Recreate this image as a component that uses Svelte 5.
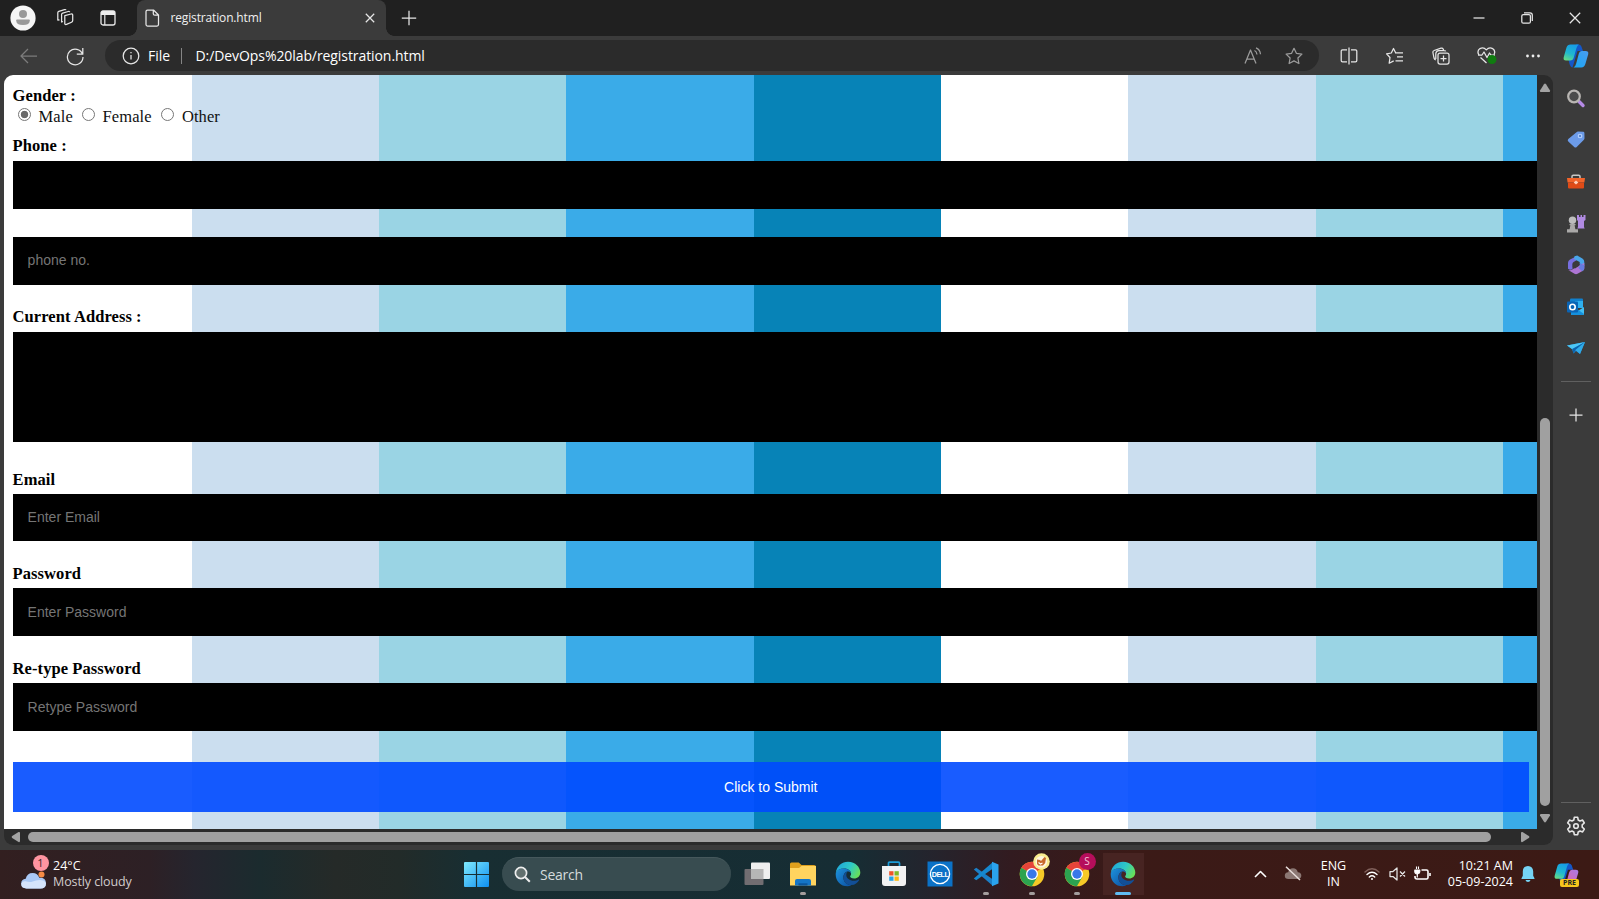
<script>
  const apps = ['taskview', 'explorer', 'edge', 'store', 'dell', 'vscode', 'chromeA', 'chromeB', 'edgeActive'];
  const side = ['search', 'tag', 'toolbox', 'games', 'm365', 'outlook', 'plane'];
  const genders = ['Male', 'Female', 'Other'];
  const running = ['explorer', 'vscode', 'chromeA', 'chromeB'];
</script>

<svelte:head><title>registration.html</title></svelte:head>

{#snippet edgeLogo(id)}
  <svg width="26" height="26" viewBox="0 0 26 26">
    <defs>
      <linearGradient id={id + 'a'} x1="0" y1="0.2" x2="1" y2="0.6"><stop offset="0" stop-color="#1ea5dc" /><stop offset=".55" stop-color="#2fc9c5" /><stop offset="1" stop-color="#68df58" /></linearGradient>
      <linearGradient id={id + 'b'} x1="0" y1="0" x2="1" y2="1"><stop offset="0" stop-color="#1d93dd" /><stop offset="1" stop-color="#0c4fa0" /></linearGradient>
    </defs>
    <path d="M.8 11.8C1.6 5.2 6.800.7 13 .7c7.500 0 12.300 5.600 12.300 10.800 0 3.700-2.900 6-6 6-3 0-4.200-1.200-4.200-1.900 0-.6 1-1.100 1-3 0-2.600-2.600-5.200-7-5.200C4.800 7.400 2 9.500.8 11.800z" fill="url(#{id}a)" />
    <path d="M.7 13.200c0-3.400 3.500-5.800 7.800-5.800 5 0 7.600 2.700 7.600 5.200-.9-1.800-2.500-2-3.300-2-2.300 0-4.400 2.500-4.400 5.900 0 4.200 3.400 7.500 7.800 7.500 0 0-1.300 1.300-3.600 1.300C5.400 25.300.7 19.800.7 13.200z" fill="url(#{id}b)" />
    <path d="M12.800 10.700c-2.300.3-4.400 2.500-4.400 5.800 0 4.400 3.500 7.700 8 7.600 3.600-.1 6.300-2.500 7.500-4.600.4-.7-.1-1.100-.7-.8-1.100.6-2.700 1-4.300 1-4.300 0-7.600-2.600-7.600-5.800 0-1.500.6-2.500 1.500-3.200z" fill="#124f96" />
  </svg>
{/snippet}

{#snippet chromeLogo()}
  <svg width="26" height="26" viewBox="0 0 26 26">
    <circle cx="13" cy="13" r="12.300" fill="#f6c927" />
    <path d="M13 13 2.350 6.850a12.300 12.300 0 0 1 21.300 0z" fill="#e6443a" />
    <path d="M13 13 2.350 6.850A12.300 12.300 0 0 0 12.900 25.300L18.300 16z" fill="#2ca350" />
    <path d="M13 7h11L23.650 6.850H13z" fill="#e6443a" />
    <circle cx="13" cy="13" r="6" fill="#fff" /><circle cx="13" cy="13" r="4.700" fill="#3878e8" />
  </svg>
{/snippet}

{#snippet appIcon(name)}
  {#if name === 'taskview'}
    <svg width="26" height="26" viewBox="0 0 26 26"><rect x=".5" y="8" width="19" height="16" rx="1" fill="#716d71" /><rect x="7" y="1.500" width="19" height="16.500" rx="1" fill="#efefef" /><rect x="7" y="8" width="12.500" height="10" fill="#b6b6b6" /></svg>
  {:else if name === 'explorer'}
    <svg width="26" height="26" viewBox="0 0 26 26"><path d="M0 3q0-1.500 1.500-1.500h7.200L11.500 4H24q2 0 2 2v17H0z" fill="#dfa01d" /><path d="M0 7h9l2.500-2H26v19.500H0z" fill="#ffd45f" /><path d="M5 24.500V20q0-2 2-2h12q2 0 2 2v4.500z" fill="#1475c6" /><path d="M8.500 24.500v-2.200h9v2.200z" fill="#0b559a" /></svg>
  {:else if name === 'edge'}
    {@render edgeLogo('e1')}
  {:else if name === 'edgeActive'}
    {@render edgeLogo('e2')}
  {:else if name === 'store'}
    <svg width="26" height="26" viewBox="0 0 26 26"><path d="M7.500 6V2.200q0-1 1-1h9q1 0 1 1V6" fill="none" stroke="#1c9bd7" stroke-width="1.700" /><path d="M1 5h24v17q0 3-3 3H4q-3 0-3-3z" fill="#f2f2f3" /><path d="M8.200 10.200h4.300v4.300H8.200z" fill="#ef5328" /><path d="M13.500 10.200h4.300v4.300h-4.300z" fill="#7fb927" /><path d="M8.200 15.500h4.300v4.300H8.200z" fill="#26a3e6" /><path d="M13.500 15.500h4.300v4.300h-4.300z" fill="#fab912" /></svg>
  {:else if name === 'dell'}
    <svg width="26" height="26" viewBox="0 0 26 26"><path d="M.5.5h25v25H.5z" fill="#0b72c7" /><circle cx="13" cy="13" r="9.600" fill="none" stroke="#fff" stroke-width="1.300" /><text x="13" y="15.700" text-anchor="middle" font-family="Liberation Sans, sans-serif" font-weight="bold" font-size="7.200" letter-spacing="-.6" fill="#fff">DELL</text></svg>
  {:else if name === 'vscode'}
    <svg width="26" height="26" viewBox="0 0 26 26"><path d="M.8 8.600 3.200 6.800 20 18.500V25z" fill="#1b7fc7" /><path d="M.8 17.400 3.200 19.200 20 7.500V1z" fill="#1688cf" /><path d="M19 .8 25.500 3.600v18.800L19 25.200z" fill="#2aa3ee" /></svg>
  {:else}
    {@render chromeLogo()}
    {#if name === 'chromeA'}
      <svg class="chip" width="17" height="17" viewBox="0 0 17 17"><circle cx="8.500" cy="8.500" r="8.300" fill="#f9ec8f" /><circle cx="8.300" cy="8.800" r="5.800" fill="#fff6df" /><path d="M4 9V6.500l3 .5 1 1 3.500-4L13 5l-.8 5-2.200 2.500H5.500L4 11z" fill="#c8692b" /><path d="m5.500 9.500 2 1.500 2-1" fill="none" stroke="#fff" stroke-width="1.100" /></svg>
    {:else}
      <span class="chip pink">S</span>
    {/if}
  {/if}
{/snippet}

{#snippet sideIcon(name)}
  {#if name === 'search'}
    <svg width="20" height="20" viewBox="0 0 20 20"><path d="m13 12.500 4 4" stroke="#b58ae6" stroke-width="3.400" stroke-linecap="round" /><circle cx="8" cy="7.500" r="5.800" fill="#4b4b4b" stroke="#b9b6b3" stroke-width="2.200" /></svg>
  {:else if name === 'tag'}
    <svg width="20" height="20" viewBox="0 0 20 20"><path d="M10.500 2.200q.6-.6 1.500-.6l5.200.2q1.100.1 1.200 1.200l.1 5.300q0 .8-.6 1.400L10.700 17q-1.200 1.200-2.500 0L2.300 11.400q-1.200-1.300 0-2.500z" fill="#6c9be8" /><circle cx="14" cy="6" r="1.800" fill="#5b86cf" stroke="#b8d4ff" stroke-width="1.100" /></svg>
  {:else if name === 'toolbox'}
    <svg width="20" height="20" viewBox="0 0 20 20"><path d="M6 6V4.500q0-1.300 1.300-1.300h5.400q1.300 0 1.300 1.300V6" fill="none" stroke="#c9c7c5" stroke-width="1.500" /><path d="M1 6h18l-.6 4.500H1.600z" fill="#f2642a" /><path d="M2 10.500h16v5q0 1-1 1H3q-1 0-1-1z" fill="#df4b17" /><path d="m10 8.500 2.300 2-2.300 2-2.300-2z" fill="#ffd1bb" /></svg>
  {:else if name === 'games'}
    <svg width="20" height="20" viewBox="0 0 20 20"><path d="M11 1h2v2h1.500V1h1.500v2h1.500V1h2v5l-1.500 1v6l.7 1.500h-7.400L12 13V7l-1-1z" fill="#b08ae2" /><circle cx="6.500" cy="6.300" r="3.700" fill="#bdbdbd" /><path d="M3.500 10h6v1.200H8.600l.8 4h2.600v3.300H1v-3.300h2.600l.8-4H3.500z" fill="#aaa9a8" /></svg>
  {:else if name === 'm365'}
    <svg width="20" height="20" viewBox="0 0 20 20"><path d="M10.500 1.200 4 4.400Q2 5.500 2 7.700v6q2.600 1.800 4.500.2V8.700q0-1.200 1.100-1.800l2.900-1.600z" fill="#776fe0" /><path d="m8.500 1.200 2.700-.6 5.200 3Q18.300 4.700 18.300 7v4l-4.600-2.500V7L8 4z" fill="#49a6e9" /><path d="M18.300 8v5q0 2-1.800 3l-5 2.800q-1.500.7-3 0l-6.300-3.900q2.300 1 4.500-.6l7-4.400z" fill="#ad75d4" /><path d="m13.700 8 4.600 2.200V14q-.5 1.600-2 2.300l-4.100-3.600 1.500-1.200z" fill="#667bde" /><path d="m10 6.800 3.300 2v2L9 13.500l-2.300-1.300V8.700z" fill="#3b3b3b" /></svg>
  {:else if name === 'outlook'}
    <svg width="20" height="20" viewBox="0 0 20 20"><path d="M5 1.500h11q1 0 1 1v8H4v-8q0-1 1-1z" fill="#1180cd" /><path d="M9 4h8v7H9z" fill="#2fb0ee" /><path d="m5 11 7 3 6-4v7q0 1-1 1H6q-1 0-1-1z" fill="#42bff3" /><path d="m18 17-7-5-6 2v3q0 1 1 1h11z" fill="#1491de" /><rect x="1" y="4.500" width="11" height="11" rx="1" fill="#0a64b5" /><circle cx="6.500" cy="10" r="2.700" fill="none" stroke="#fff" stroke-width="1.600" /></svg>
  {:else}
    <svg width="20" height="20" viewBox="0 0 20 20"><path d="M1 7.500 19 4l-5 12-4-3-2.500 2.500L6 11z" fill="#1b8bd8" /><path d="M1 7.500 19 4 6 11z" fill="#4cc6f5" /><path d="M19 4 6.500 11l1 4.500L9.500 12z" fill="#0c62aa" /><path d="M19 4 9.500 12l4.500 4z" fill="#30aae7" /></svg>
  {/if}
{/snippet}

{#snippet copilot(id, size)}
  <svg width={size} height={size} viewBox="0 0 26 26">
    <defs>
      <linearGradient id={id + 'l'} x1=".6" y1="0" x2="0.2" y2="1"><stop offset="0" stop-color="#169ce8" /><stop offset=".55" stop-color="#20b8cf" /><stop offset="1" stop-color="#66dc83" /></linearGradient>
      <linearGradient id={id + 'r'} x1="1" y1="0" x2="0" y2="1"><stop offset="0" stop-color={id === 'c1' ? '#4a9cf0' : '#a77be9'} /><stop offset="1" stop-color={id === 'c1' ? '#18a8f5' : '#e9609b'} /></linearGradient>
    </defs>
    <path d="M13 1.500h2.500q2.200 0 2.900 2L20 8h-5.500l-5 16.500q-2-.5-2.800-3L5.500 17z" fill="#1457c9" />
    <path d="M7.500 1.500h8.300q-1.600 1-2.300 3.500l-2.700 9.500q-.8 3-3.500 3H3q-3 0-2.300-3.200L3.500 4.500q.9-3 4-3z" fill="url(#{id}l)" />
    <path d="M18.800 8h3.700q3.400 0 2.700 3.300l-2.700 9.200q-1 4-4.300 4h-7.700q2-1 2.700-4L15.700 11q.8-3 3.100-3z" fill="url(#{id}r)" />
  </svg>
{/snippet}

<div class="screen">
  <header class="titlebar">
    <div class="cell w47"><svg width="26" height="26" viewBox="0 0 26 26"><circle cx="13" cy="13" r="12.600" fill="#f5f5f5" /><circle cx="13" cy="8.900" r="4" fill="#999" /><path d="M7 14.500h12q.8 0 .8 1 0 4.500-6.800 4.500t-6.800-4.500q0-1 .8-1z" fill="#999" /></svg></div>
    <div class="cell w36"><svg width="20" height="20" viewBox="0 0 20 20" class="line"><path d="M9.800 7.700 16 6q1.500-.3 1.700 1v5.500q0 1.300-1.200 1.700l-5 2.200q-1.600.5-1.700-.8z" /><path d="M8 13.500 6.600 14V6.500q0-1 1.100-1.400l5.500-1.600q1.300-.3 1.500.7" /><path d="m4.500 11.800-1.700.4V4.700q0-1 1-1.400L9.500 1.600q1.200-.3 1.500.5" /></svg></div>
    <div class="cell w50"><svg width="18" height="18" viewBox="0 0 18 18"><rect x="2" y="2" width="14" height="14" rx="2" fill="none" stroke="#e8e8e8" stroke-width="1.300" /><path d="M2 3.500Q2 2 3.500 2h11Q16 2 16 3.500V6H2z" fill="#eee" /><path d="M5.800 6v10" stroke="#e8e8e8" stroke-width="1.200" /></svg></div>
    <div class="tab">
      <svg width="16" height="18" viewBox="0 0 16 18" class="line"><path d="M3.500 1h6L14.500 6v9.500q0 1.500-1.500 1.500H3.500Q2 17 2 15.500v-13Q2 1 3.500 1zM9.300 1v3.700q0 1.500 1.500 1.500h3.700" /></svg>
      <span class="tabname">registration.html</span>
      <svg width="10" height="10" viewBox="0 0 10 10" class="line"><path d="m.8.8 8.400 8.400M9.200.8.800 9.200" /></svg>
    </div>
    <div class="cell w46"><svg width="16" height="16" viewBox="0 0 16 16" class="line"><path d="M8 .8v14.400M.8 8h14.400" /></svg></div>
    <div class="grow"></div>
    <div class="cell w48"><svg width="12" height="12" viewBox="0 0 12 12" class="line"><path d="M.5 6h11" /></svg></div>
    <div class="cell w48"><svg width="12" height="12" viewBox="0 0 12 12" class="line"><rect x=".8" y="2.600" width="8.600" height="8.600" rx="1.500" /><path d="M3 .8h6q2.300 0 2.300 2.300V9" /></svg></div>
    <div class="cell w48"><svg width="12" height="12" viewBox="0 0 12 12" class="line"><path d="m.8.800 10.400 10.400M11.200.8.800 11.200" /></svg></div>
  </header>

  <nav class="toolbar">
    <div class="cell w58"><svg width="18" height="16" viewBox="0 0 18 16" class="line dim"><path d="M17 8H1.200M8 1 1 8l7 7" /></svg></div>
    <div class="cell w34"><svg width="20" height="20" viewBox="0 0 20 20" class="line"><path d="M17.500 8.200A7.800 7.800 0 1 0 18 11M17.800 2v6.200h-6" /></svg></div>
    <div class="address">
      <svg width="18" height="18" viewBox="0 0 18 18" class="line"><circle cx="9" cy="9" r="7.800" /><path d="M9 8v4.500M9 5v1.300" /></svg>
      <span class="scheme">File</span>
      <i></i>
      <span class="url">D:/DevOps%20lab/registration.html</span>
      <div class="cell w41"><svg width="18" height="18" viewBox="0 0 18 18" class="line mid"><path d="M1 16.500 6.500 3 12 16.500M2.800 12h7.400M10.500 3.500q2.200 1 2.500 4M12 .800q4 1.500 4.500 6.500" /></svg></div>
      <div class="cell w41"><svg width="18" height="18" viewBox="0 0 18 18" class="line mid"><path d="m9 1.300 2.400 5 5.500.8-4 3.900 1 5.500L9 13.900l-4.900 2.600 1-5.500-4-3.900 5.500-.8z" /></svg></div>
    </div>
    <div class="cell w46 first"><svg width="18" height="18" viewBox="0 0 18 18" class="line"><path d="M7 2.800H2.500Q1.200 2.800 1.200 4v9.500q0 1.300 1.300 1.300H7M11 2.800h4.500q1.300 0 1.300 1.200v9.500q0 1.300-1.300 1.300H11M9 .5v17" /></svg></div>
    <div class="cell w46"><svg width="18" height="18" viewBox="0 0 18 18" class="line"><path d="M9.500 5.500 7.500 1.500l-2.200 4.500-4.700.8L4 10.500l-.8 5.700 4.500-2.300M9 5.800h8M11 9.800h6M9.500 13.800H17" /></svg></div>
    <div class="cell w46"><svg width="18" height="18" viewBox="0 0 18 18" class="line"><rect x="6" y="6" width="11" height="11" rx="2" /><path d="M11.500 8.500v6M8.500 11.500h6M3.800 12.800Q2.400 12.500 2 11L.9 5.500q-.2-1.600 1.200-2L9 1.200q1.600-.4 2.300 1l.4 1.300M3.800 12V6.500q.3-2.700 3-2.900h5q1.700 0 2 .8" /></svg></div>
    <div class="cell w46"><svg width="20" height="19" viewBox="0 0 20 19" class="line"><path d="M2 9Q-.5 5 3 2.600q3.500-2 6.300 1.200 3-3.300 6.300-1.200Q19 5 17 8.500M1 9h4l2-3 3 5.500L12.500 7 14 9h4M3.500 11.500l6 5.500" /><circle cx="15" cy="13.500" r="4.500" fill="#107c10" stroke="none" /></svg></div>
    <div class="cell w46"><svg width="16" height="4" viewBox="0 0 16 4" fill="#eee"><circle cx="2.500" cy="2" r="1.400" /><circle cx="8" cy="2" r="1.400" /><circle cx="13.500" cy="2" r="1.400" /></svg></div>
    <div class="cell w40">{@render copilot('c1', 26)}</div>
  </nav>

  <div class="middle">
    <div class="viewport">
      <form class="page" onsubmit={(e) => e.preventDefault()}>
        <b class="gender">Gender :</b>
        <div class="radios">
          {#each genders as g, i}
            <label class={'g' + i}><span class="radio" class:on={i === 0}></span>{g}</label>
          {/each}
        </div>
        <b class="phone">Phone :</b>
        <input class="p1" />
        <input class="p2" placeholder="phone no." />
        <b class="addr">Current Address :</b>
        <textarea></textarea>
        <b class="email">Email</b>
        <input class="em" placeholder="Enter Email" />
        <b class="pass">Password</b>
        <input class="pw" placeholder="Enter Password" />
        <b class="retype">Re-type Password</b>
        <input class="pw" placeholder="Retype Password" />
        <button>Click to Submit</button>
      </form>
      <div class="vbar">
        <svg width="12" height="10" viewBox="0 0 12 10"><path d="M5 1.200q1-1.200 2 0l4 6.300q.5 1.500-1 1.500H2Q.5 9 1 7.500z" fill="#a3a3a3" /></svg>
        <div class="vthumb"></div>
        <svg width="12" height="10" viewBox="0 0 12 10"><path d="M5 8.800q1 1.200 2 0l4-6.300Q11.500 1 10 1H2Q.5 1 1 2.500z" fill="#a3a3a3" /></svg>
      </div>
      <div class="hbar">
        <svg width="10" height="12" viewBox="0 0 10 12"><path d="M1.200 5q-1.200 1 0 2l6.300 4q1.500.5 1.500-1V2q0-1.500-1.500-1z" fill="#a3a3a3" /></svg>
        <div class="hthumb"></div>
        <svg width="10" height="12" viewBox="0 0 10 12"><path d="M8.800 5q1.200 1 0 2l-6.300 4Q1 11.500 1 10V2Q1 .5 2.500 1z" fill="#a3a3a3" /></svg>
      </div>
    </div>
    <aside>
      {#each side as s}<div class="sidecell">{@render sideIcon(s)}</div>{/each}
      <hr />
      <div class="sidecell plus"><svg width="14" height="14" viewBox="0 0 14 14" class="line"><path d="M7 .5v13M.5 7h13" /></svg></div>
      <div class="grow"></div>
      <hr class="low" />
      <div class="gear"><svg width="20" height="20" viewBox="0 0 20 20" class="line"><path d="M8.300 1.300h3.400l.5 2.700 1.800 1 2.600-.9 1.700 2.900-2.100 1.800v2.400l2.100 1.800-1.700 2.900-2.600-.9-1.800 1-.5 2.700H8.300L7.800 16 6 15l-2.600.9L1.700 13l2.100-1.800V8.800L1.700 7l1.700-2.900L6 5l1.800-1z" stroke-linejoin="round" stroke-width="1.600" /><circle cx="10" cy="10" r="2.300" stroke-width="1.600" /></svg></div>
    </aside>
  </div>

  <footer>
    <div class="weather">
      <div class="cloud">
        <svg width="28" height="20" viewBox="0 0 28 20"><circle cx="21.500" cy="4.500" r="3" fill="#f58b45" /><path d="M6.500 18.500q-5.300-.2-5.300-5 0-4.300 4.500-4.700Q7 3 12.700 3q5 0 6.600 4.800 6.500-.3 6.700 5.400-.2 5.300-5.500 5.300z" fill="#a9c8f5" /><path d="M6.500 18.500q-5.300-.2-5.300-5 1.500-3 4.500-2.200 4 1.500 7 .2t7-1.500q5 0 6.300 3.200-.2 5.300-5.500 5.300z" fill="#d5e4fc" /></svg>
        <span class="count">1</span>
      </div>
      <div class="wtext"><div class="temp">24°C</div><div class="cond">Mostly cloudy</div></div>
    </div>
    <svg class="start" width="25" height="25" viewBox="0 0 25 25"><defs><linearGradient id="win" x1="0" y1="0" x2="1" y2="1"><stop offset="0" stop-color="#7fe9fd" /><stop offset="1" stop-color="#0e8ff0" /></linearGradient></defs><path d="M0 1q0-1 1-1h10.900v11.900H0zM13.100 0H24q1 0 1 1v10.900H13.100zM0 13.100h11.900V25H1q-1 0-1-1zM13.100 13.100H25V24q0 1-1 1H13.100z" fill="url(#win)" /></svg>
    <div class="searchbox">
      <svg width="17" height="17" viewBox="0 0 17 17"><circle cx="7" cy="7" r="5.600" fill="#62706f" stroke="#eee" stroke-width="1.700" /><path d="m11 11 4.800 4.800" stroke="#eee" stroke-width="2" /></svg>
      <span>Search</span>
    </div>
    <div class="apps">
      {#each apps as a}
        <div class="app" class:active={a === 'edgeActive'} class:running={running.includes(a)}>{@render appIcon(a)}</div>
      {/each}
    </div>
    <div class="grow"></div>
    <div class="tray">
      <div class="cell t1"><svg width="13" height="8" viewBox="0 0 13 8" class="line bold"><path d="m1 7 5.500-5.500L12 7" /></svg></div>
      <div class="cell t2"><svg width="18" height="15" viewBox="0 0 18 15"><path d="M4.500 13Q.8 13 .8 9.700q0-3 3.400-3.400Q5 2.200 9 2.200q3.800 0 4.800 4 3.500.2 3.500 3.400T14 13z" fill="#8b7773" /><path d="M2 .8 16 14" stroke="#e9dfdc" stroke-width="1.500" /></svg></div>
      <div class="lang"><div>ENG</div><div>IN</div></div>
      <div class="cell t3"><svg width="16" height="14" viewBox="0 0 16 14" fill="none" stroke-linecap="round" stroke-width="1.400"><path d="M1 5Q8-1.500 15 5" stroke="#80605b" /><path d="M3 7.500q5-4.500 10 0M5.300 10q2.700-2.500 5.400 0" stroke="#fff" /><circle cx="8" cy="12" r="1" fill="#fff" stroke="none" /></svg></div>
      <div class="cell t4"><svg width="17" height="14" viewBox="0 0 17 14" class="line"><path d="M1 4.500h3L8 1v12L4 9.500H1zM11 4.500l5 5M16 4.500l-5 5" /></svg></div>
      <div class="cell t5"><svg width="18" height="15" viewBox="0 0 18 15" class="line bold"><path d="M8.500 4h5Q15 4 15 5.500v6q0 1.500-1.500 1.500H4q-2 0-2-2v-1M17 7v3" /><path d="M3.500.5V3M5.500.5V3M1.800 4h5v2Q6.500 8 4.300 8 2 8 1.800 6z" stroke-width="1.100" fill="#fff" /><path d="M4.300 8v3.500" stroke-width="1.200" /></svg></div>
      <div class="clock"><div class="time">10:21 AM</div><div class="date">05-09-2024</div></div>
      <svg class="bell" width="16" height="18" viewBox="0 0 16 18"><path d="M8 1q5 .2 5.200 5.500v4.200l1.300 2.500q.2.800-.8.800H2.300q-1 0-.8-.8l1.300-2.500V6.500Q3 1.200 8 1zM5.500 15h5Q10 17 8 17t-2.500-2z" fill="#75d3f4" /></svg>
      <div class="pre">{@render copilot('c2', 25)}<span>PRE</span></div>
    </div>
  </footer>
</div>

<style>
  :global(body) { margin: 0; overflow: hidden; }
  .screen { width: 1599px; height: 899px; display: flex; flex-direction: column; background: #3b3b3b; color: #fff; font-family: "Open Sans", "Noto Sans", sans-serif; overflow: hidden; }
  .screen * { box-sizing: border-box; }
  svg { display: block; flex: none; }
  .line { fill: none; stroke: #e6e6e6; stroke-width: 1.25; stroke-linejoin: round; }
  .dim { stroke: #7c7c7c; }
  .mid { stroke: #9b9b9b; }
  .bold { stroke-width: 1.6; stroke: #fff; }
  .grow { flex: 1; }
  .cell { display: flex; align-items: center; justify-content: center; flex: none; height: 100%; }
  .w34 { width: 34px; } .w36 { width: 36px; } .w40 { width: 40px; } .w41 { width: 41px; } .w46 { width: 46px; }
  .w47 { width: 47px; } .w48 { width: 48px; } .w50 { width: 50px; } .w58 { width: 58px; }

  .titlebar { height: 36px; flex: none; display: flex; background: #202020; }
  .titlebar .w47 { padding-right: 1px; }
  .titlebar .w36 { padding-right: 1px; }
  .tab { width: 249px; margin-left: 4px; background: #3b3b3b; border-radius: 8px 8px 0 0; display: flex; align-items: center; padding: 0 11px 0 7px; position: relative; }
  .tab::before, .tab::after { content: ""; position: absolute; bottom: 0; width: 8px; height: 8px; }
  .tab::before { left: -8px; background: radial-gradient(circle at 0 0, transparent 7.500px, #3b3b3b 8px); }
  .tab::after { right: -8px; background: radial-gradient(circle at 100% 0, transparent 7.500px, #3b3b3b 8px); }
  .tabname { margin-left: 10.500px; flex: 1; font-size: 12px; letter-spacing: -.15px; line-height: 16px; padding-bottom: 1px; white-space: nowrap; color: #f0f0f0; }

  .toolbar { height: 39px; flex: none; display: flex; align-items: center; }
  .address { margin-left: 13px; width: 1214px; height: 31px; border-radius: 16px; background: #2b2b2b; display: flex; align-items: center; padding: 0 4.500px 0 17px; font-size: 14px; line-height: 20px; white-space: nowrap; }
  .scheme { margin-left: 8px; width: 33px; }
  .address i { width: 1px; height: 16px; background: #858585; }
  .url { margin-left: 13.500px; flex: 1; letter-spacing: -.08px; }
  .first { margin-left: 7px; }

  .middle { height: 775px; flex: none; display: flex; }
  .viewport { margin-left: 4px; width: 1549px; height: 770px; display: grid; grid-template: 754px 16px / 1533px 16px; background: #2b2b2b; border-radius: 9px; overflow: hidden; }
  .page { overflow: hidden; display: flex; flex-direction: column; align-items: stretch; padding: 10.600px 0 0 8.600px; color: #111;
    font-family: "Liberation Serif", serif; font-size: 16.500px;
    background: linear-gradient(90deg, #fff 0 187.900px, #cbdeef 187.900px 375.300px, #9ad4e4 375.300px 562.300px, #3aabe8 562.300px 749.600px, #0783b7 749.600px 937px, #fff 937px 1124.500px, #cbdeef 1124.500px 1312px, #9ad4e4 1312px 1499.300px, #3aabe8 1499.300px); }
  .page b { height: 20px; line-height: 20px; letter-spacing: .08px; flex: none; color: #000; white-space: nowrap; }
  .radios { display: flex; height: 20px; line-height: 21px; flex: none; letter-spacing: .07px; }
  .radios label { display: flex; align-items: flex-start; }
  .radio { width: 13px; height: 13px; margin: 2px 8px 0 5px; border: 1px solid #777; border-radius: 50%; background: #fff; display: block; }
  .radio.on { background: radial-gradient(circle, #6b6b6b 3.400px, #fff 4.100px); }
  .g0 { width: 64px; } .g1 { width: 79.400px; }
  .page .phone { margin-top: 10.900px; }
  .page input, .page textarea { width: 100%; flex: none; border: 0; margin: 0; border-radius: 0; background: #000; color: #ddd; padding: 0 15px; font: 14px "Liberation Sans", Arial, sans-serif; outline: 0; resize: none; }
  .page input::placeholder { color: #757575; opacity: 1; }
  .page .p1 { height: 48px; margin-top: 4.500px; }
  .page .p2 { height: 48px; margin-top: 28px; padding-bottom: 2px; }
  .addr { margin-top: 22.200px; }
  .page textarea { height: 110px; margin-top: 5px; }
  .email { margin-top: 27.500px; }
  .page .em { height: 47px; margin-top: 4.300px; }
  .pass { margin-top: 23px; }
  .page .pw { height: 48px; margin-top: 4px; }
  .retype { margin-top: 23px; }
  .page button { width: 1516.400px; height: 50px; flex: none; margin-top: 31px; padding: 0; border: 0; background: rgba(0, 74, 255, .9); color: #fff; font: 14px "Liberation Sans", Arial, sans-serif; }
  .vbar { display: flex; flex-direction: column; align-items: center; padding-top: 8px; }
  .vthumb { width: 10px; height: 388px; margin: 325px 0 7px; border-radius: 5px; background: #a0a0a0; flex: none; }
  .hbar { grid-column: 1 / 3; display: flex; align-items: center; padding-left: 7px; }
  .hthumb { width: 1463px; height: 10px; margin: 0 29px 0 7px; border-radius: 5px; background: #a0a0a0; flex: none; }

  aside { flex: 1; display: flex; flex-direction: column; align-items: center; padding-top: 3px; }
  .sidecell { height: 41.600px; width: 46px; display: flex; align-items: center; justify-content: center; flex: none; }
  hr { width: 30px; height: 1px; border: 0; margin: 12px 0 0; background: #606060; flex: none; }
  .plus { margin-top: 12px; }
  .low { margin: 0; }
  .gear { height: 47px; display: flex; align-items: center; padding-bottom: 1px; }

  footer { height: 49px; flex: none; display: flex; align-items: center; padding-bottom: 1px; white-space: nowrap; background: linear-gradient(90deg, #321f20 0, #2d2025 150px, #25252e 195px, #1b2b2e 260px, #252a28 335px, #222b29 400px, #182e32 470px, #162d34 850px, #24242d 930px, #321b20 1010px, #3b1a17 1130px, #3c1a15 1599px); }
  .weather { width: 464px; display: flex; align-items: center; padding-left: 20px; height: 49px; }
  .cloud { position: relative; width: 28px; height: 34px; padding-top: 13px; }
  .count { position: absolute; left: 12.500px; top: -2px; width: 16px; height: 16px; border-radius: 8px; background: #ff94a1; color: #3b2226; font-size: 11px; line-height: 16px; text-align: center; }
  .wtext { margin-left: 5px; font-size: 12.500px; line-height: 16.500px; color: #fff; }
  .cond { color: #d2cccd; letter-spacing: -.1px; }
  .searchbox { margin-left: 13px; width: 229px; height: 34px; border-radius: 17px; background: #384c50; border-top: 1px solid #46585c; display: flex; align-items: center; padding-left: 12px; font-size: 14px; color: #d5dbdc; }
  .searchbox span { margin-left: 9px; letter-spacing: -.25px; padding-bottom: 1px; }
  .apps { display: flex; margin-left: 3px; height: 49px; align-items: center; }
  .app { width: 45.800px; height: 43px; position: relative; display: flex; align-items: center; justify-content: center; }
  .active { background: linear-gradient(#472422, #472422) center / 41px 42px no-repeat; }
  .running::after, .active::after { content: ""; position: absolute; bottom: 1px; width: 6px; height: 3px; border-radius: 2px; background: #a49d9d; }
  .active::after { width: 16px; background: #60bdf3; }
  .chip { position: absolute; left: 24px; top: 0; width: 17px; height: 17px; }
  .pink { border-radius: 50%; background: #b50e5b; color: #f4c3d9; font-size: 10px; line-height: 17px; text-align: center; }
  .tray { display: flex; align-items: center; height: 49px; font-size: 12.500px; line-height: 16.500px; }
  .t1 { width: 30px; } .t2 { width: 36px; } .t3 { width: 26px; } .t4 { width: 24px; } .t5 { width: 26px; }
  .tray .cell { padding: 0 2px 1px 0; }
  .lang { width: 48px; text-align: center; padding-right: 5px; }
  .clock { width: 77px; text-align: right; }
  .bell { margin-left: 7px; }
  .pre { position: relative; margin: 0 20px 0 18px; width: 25px; }
  .pre span { position: absolute; left: 6px; top: 17px; width: 19px; height: 8px; border-radius: 2px; background: #f8c51c; color: #222; font-size: 7px; font-weight: 700; line-height: 8px; text-align: center; }
</style>
